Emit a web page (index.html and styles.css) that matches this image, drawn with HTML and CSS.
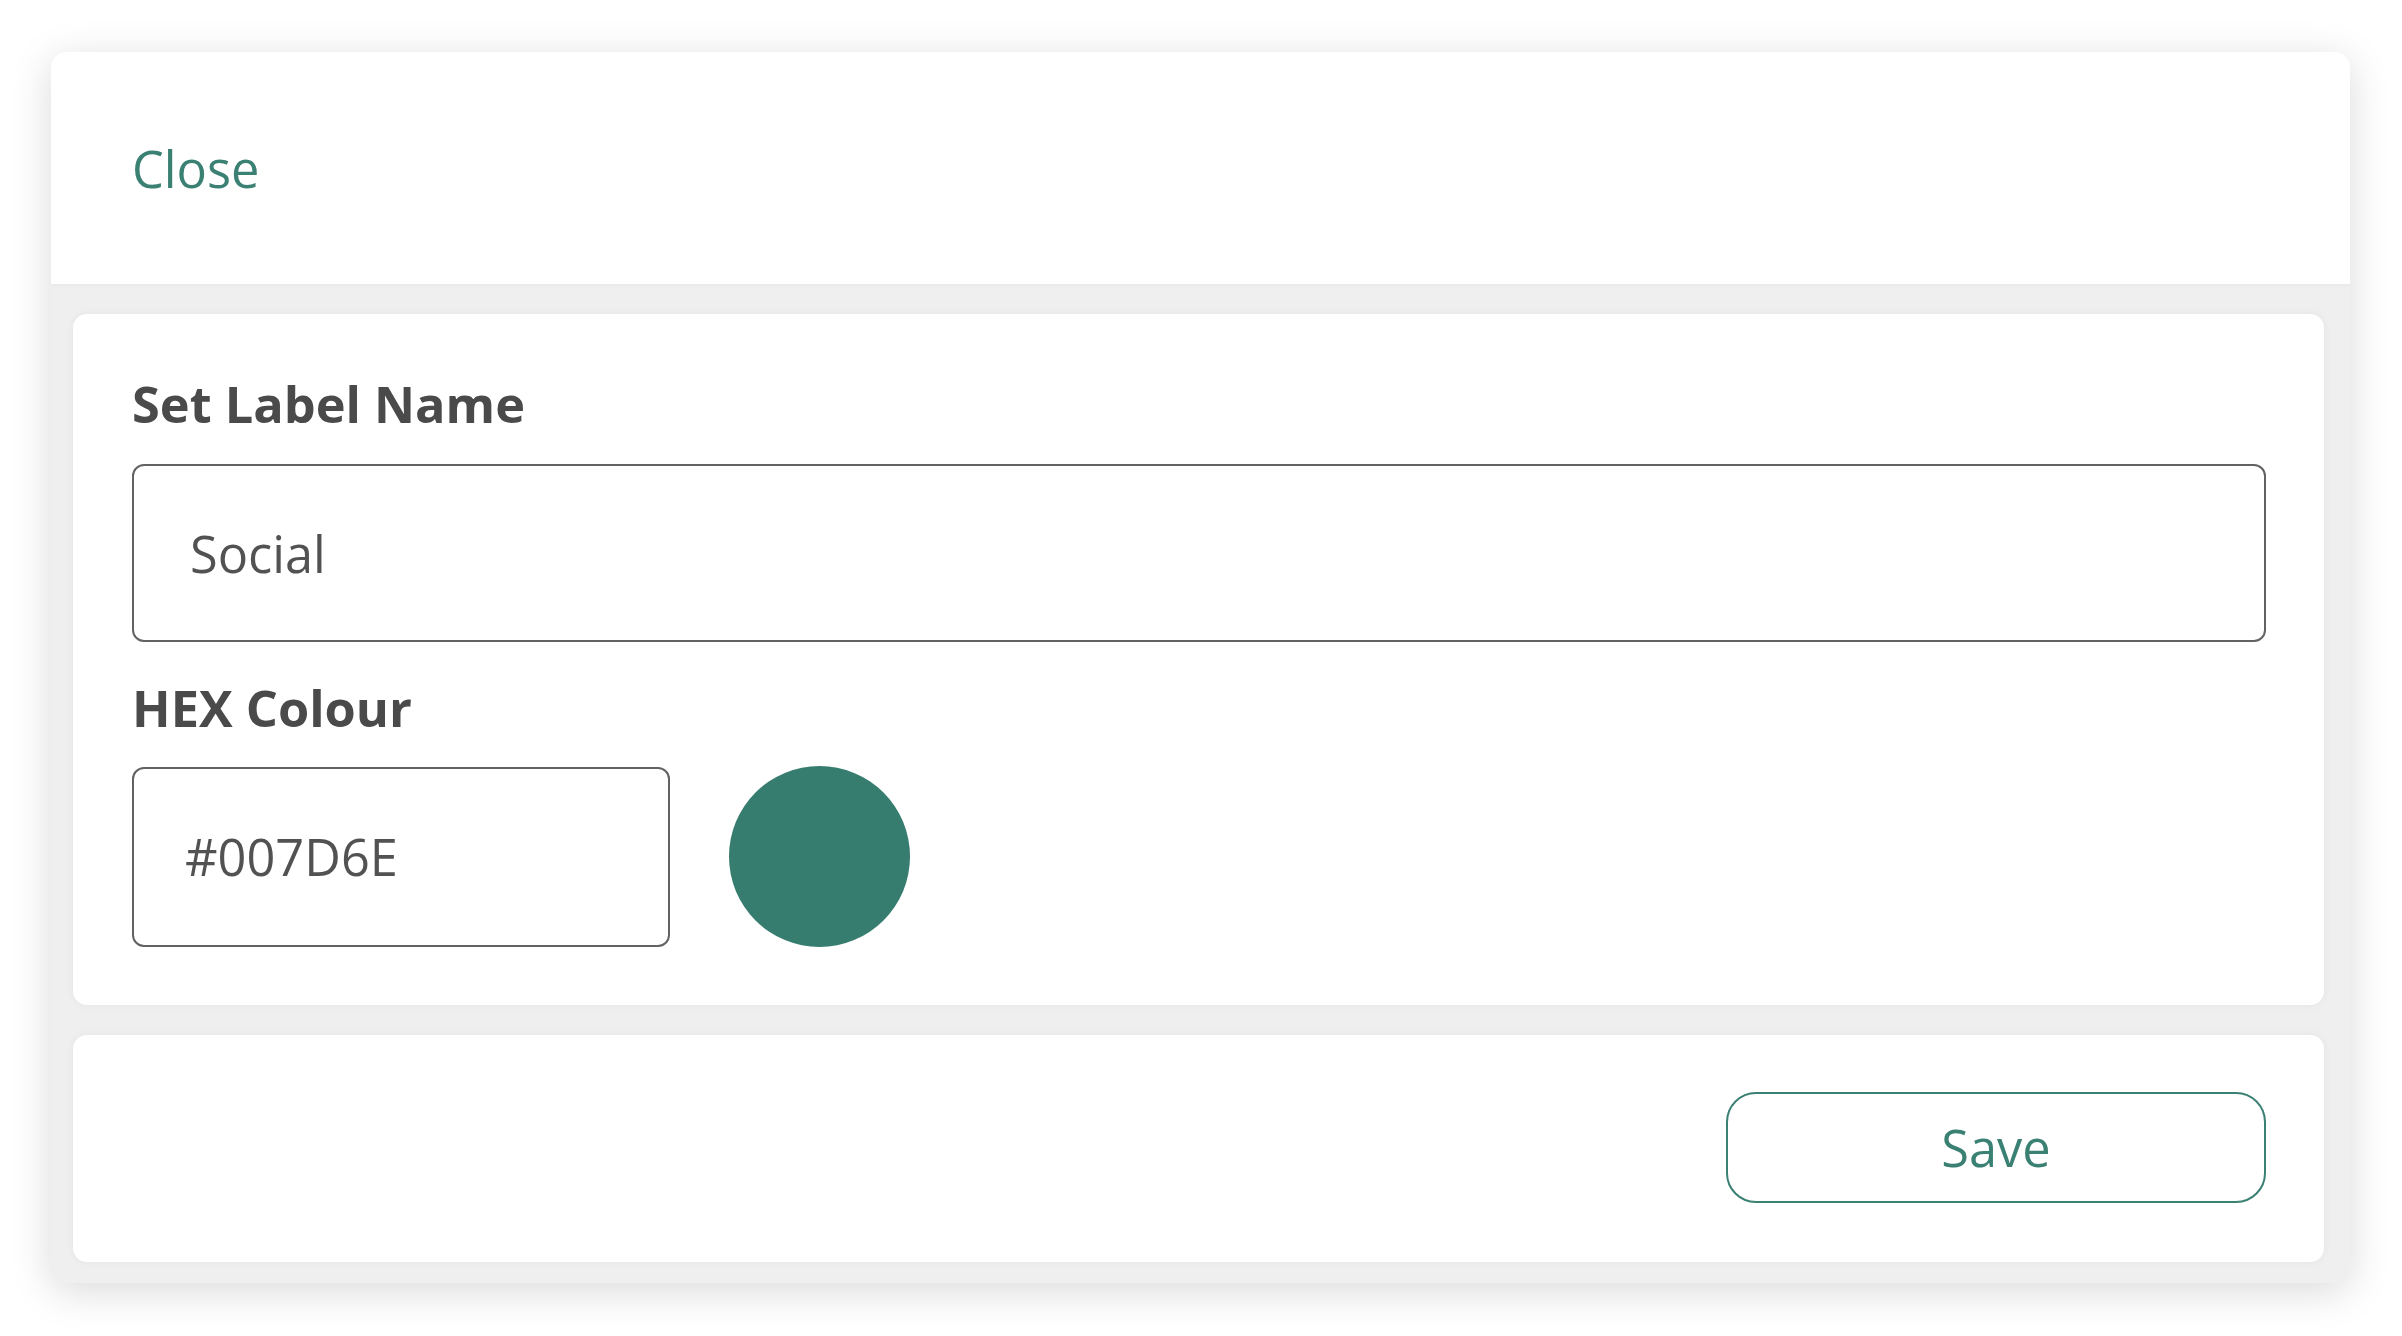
FILE: index.html
```html
<!DOCTYPE html>
<html lang="en">
<head>
<meta charset="utf-8">
<title>Set Label</title>
<link rel="stylesheet" href="styles.css">
</head>
<body>
<div class="modal">
  <div class="modal-header">
    <span class="close-link">Close</span>
  </div>
  <div class="modal-body">
    <div class="card form-card">
      <div class="field-label label-name">Set Label Name</div>
      <div class="text-input wide-input">Social</div>
      <div class="field-label label-hex">HEX Colour</div>
      <div class="hex-row">
        <div class="text-input hex-input">#007D6E</div>
        <div class="swatch"></div>
      </div>
    </div>
    <div class="card footer-card">
      <div class="save-button">Save</div>
    </div>
  </div>
</div>
</body>
</html>
```

FILE: styles.css
```css
html, body {
  margin: 0;
  padding: 0;
  background: #ffffff;
  font-family: "Open Sans", "Noto Sans", "Liberation Sans", sans-serif;
}

body {
  padding: 52px 0 0 51px;
  box-sizing: border-box;
  width: 2402px;
  height: 1336px;
  overflow: hidden;
}

.modal {
  width: 2299px;
  background: #efefef;
  border-radius: 15px;
  box-shadow: 0 8px 40px rgba(0, 0, 0, 0.15);
  overflow: hidden;
}

.modal-header {
  height: 232px;
  background: #ffffff;
  display: flex;
  align-items: center;
  padding-left: 81px;
  box-sizing: border-box;
  box-shadow: 0 1px 4px rgba(0, 0, 0, 0.04);
  position: relative;
}

.close-link {
  font-size: 50.5px;
  color: #3a8073;
  line-height: 1;
  margin-top: 2px;
}

.modal-body {
  padding: 30px 26px 21px 22px;
  display: flex;
  flex-direction: column;
  gap: 30px;
}

.card {
  background: #ffffff;
  border-radius: 14px;
  box-shadow: 0 0 10px rgba(0, 0, 0, 0.05);
}

.form-card {
  height: 691px;
  box-sizing: border-box;
  padding: 57px 58px 0 59px;
  display: flex;
  flex-direction: column;
}

.field-label {
  font-size: 50.5px;
  font-weight: 700;
  color: #4a4a4a;
  line-height: 65px;
}

.label-name {
  margin-bottom: 28px;
}

.label-hex {
  margin-top: 33px;
  margin-bottom: 26px;
}

.text-input {
  box-sizing: border-box;
  border: 2px solid #626262;
  border-radius: 12px;
  height: 179px;
  display: flex;
  align-items: center;
  font-size: 50.5px;
  color: #525252;
}

.wide-input {
  height: 178px;
  padding-left: 56px;
}

.hex-row {
  display: flex;
  align-items: center;
  gap: 59px;
}

.hex-input {
  width: 538px;
  height: 180px;
  padding-left: 51px;
}

.swatch {
  width: 181px;
  height: 181px;
  border-radius: 50%;
  background: #367d6f;
}

.footer-card {
  height: 227px;
  box-sizing: border-box;
  padding: 57px 58px 0 0;
  display: flex;
  justify-content: flex-end;
  align-items: flex-start;
}

.save-button {
  width: 540px;
  height: 111px;
  box-sizing: border-box;
  border: 2px solid #3a8073;
  border-radius: 30px;
  display: flex;
  align-items: center;
  justify-content: center;
  font-size: 50.5px;
  color: #3a8073;
}
```
